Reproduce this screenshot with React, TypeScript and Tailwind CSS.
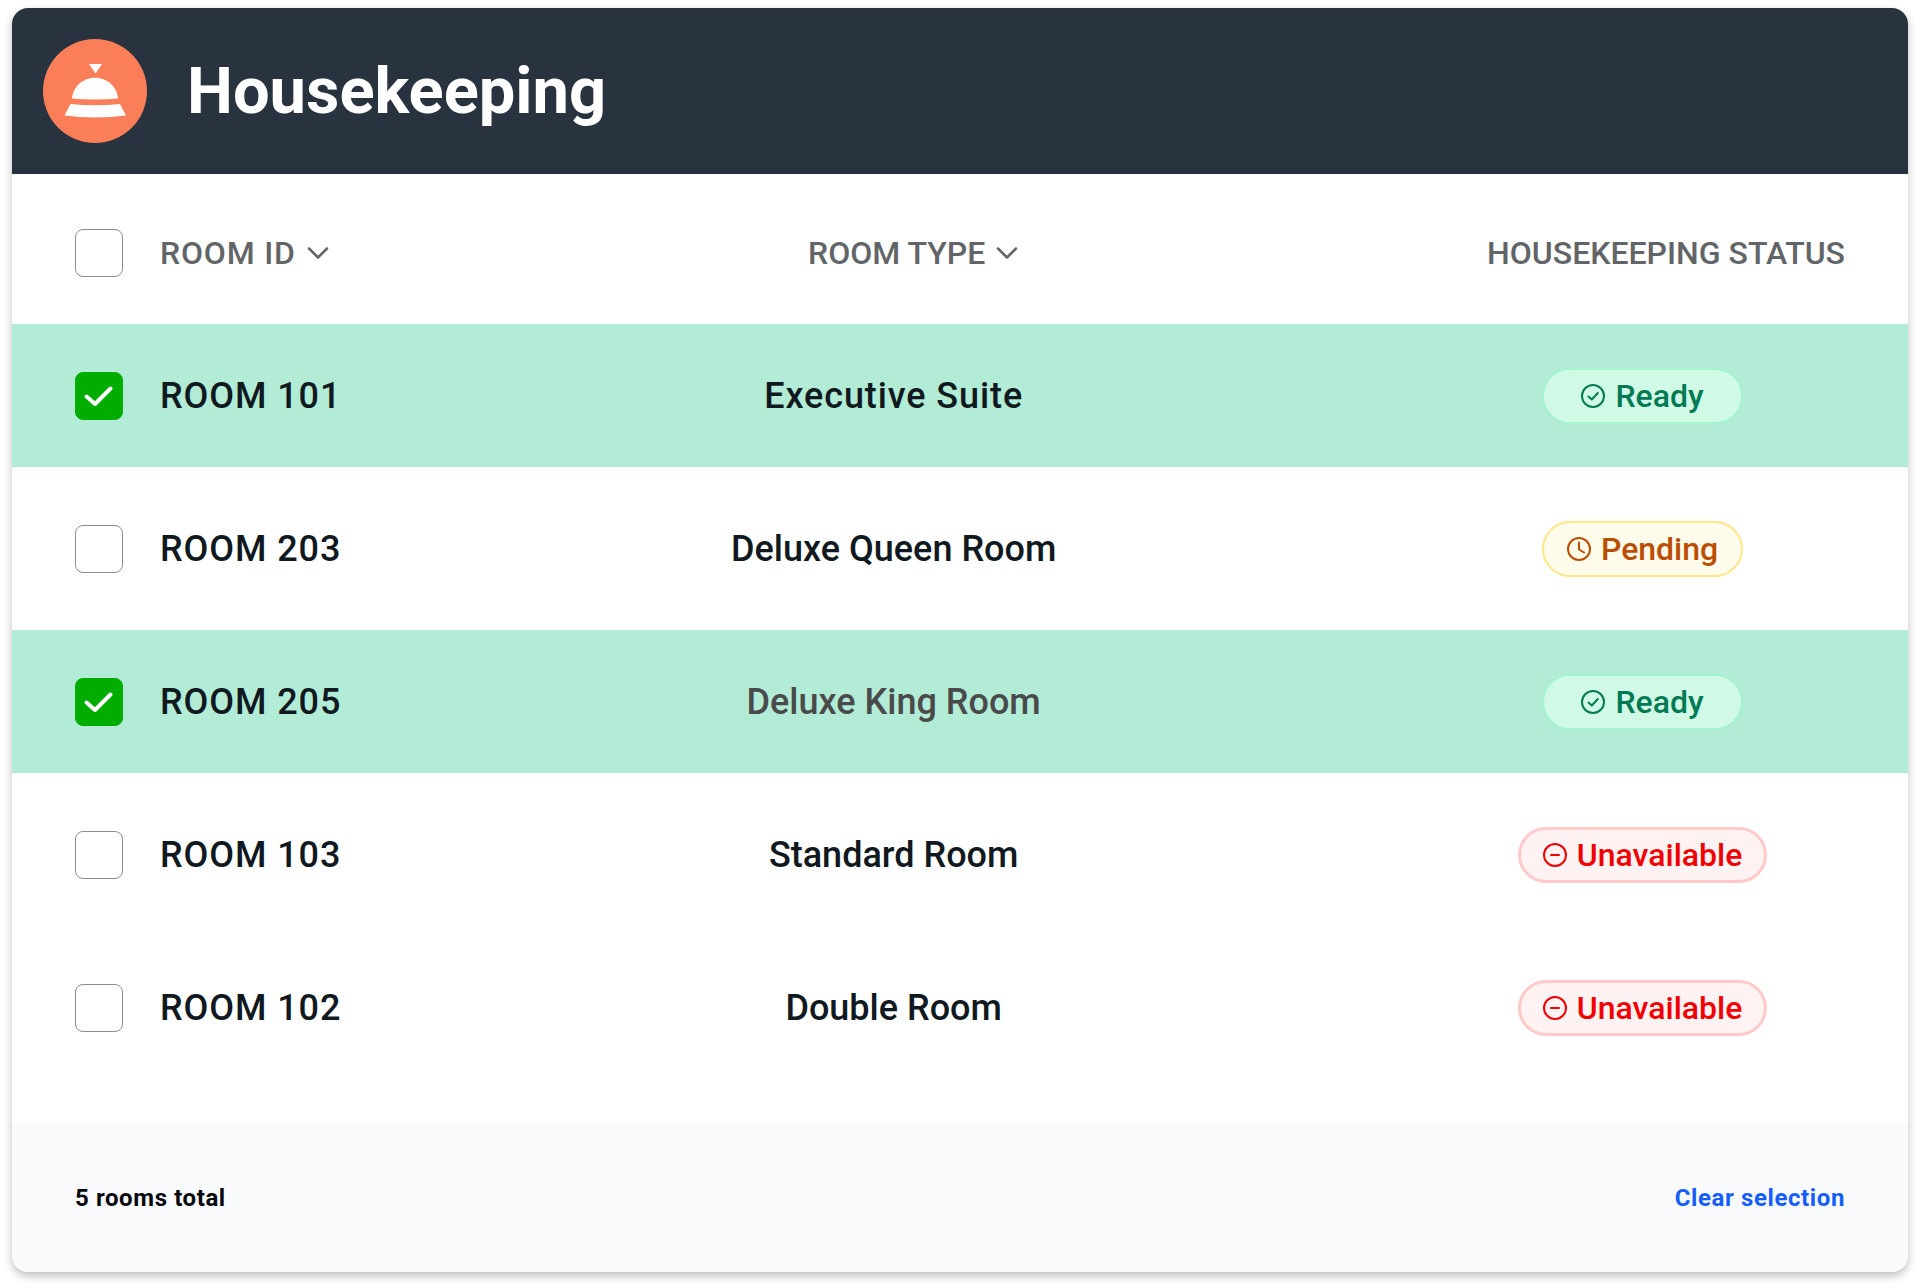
import { useState } from "react";

type Status = "ready" | "pending" | "unavailable";

interface Room {
  id: string;
  name: string;
  type: string;
  typeClass: string;
  status: Status;
}

const rooms: Room[] = [
  { id: "101", name: "ROOM 101", type: "Executive Suite", typeClass: "tracking-wide text-[#101820]", status: "ready" },
  { id: "203", name: "ROOM 203", type: "Deluxe Queen Room", typeClass: "text-[#101820]", status: "pending" },
  { id: "205", name: "ROOM 205", type: "Deluxe King Room", typeClass: "text-[#4a4a4a]", status: "ready" },
  { id: "103", name: "ROOM 103", type: "Standard Room", typeClass: "text-[#101820]", status: "unavailable" },
  { id: "102", name: "ROOM 102", type: "Double Room", typeClass: "text-[#101820]", status: "unavailable" },
];

const badges: Record<Status, { label: string; className: string; icon: string }> = {
  ready: {
    label: "Ready",
    className: "border-2 border-[#a4f4cf] bg-emerald-100 px-[37px] text-emerald-700",
    icon: "M9.5 14.5 12.8 17.5 18.8 11",
  },
  pending: {
    label: "Pending",
    className: "border-2 border-amber-200 bg-amber-50 px-[23px] text-amber-700",
    icon: "M14 7.5V14.5L19 17.5",
  },
  unavailable: {
    label: "Unavailable",
    className: "border-3 border-red-200 bg-red-50 px-[22px] text-[#f00000]",
    icon: "M10 14H18",
  },
};

function StatusBadge({ status }: { status: Status }) {
  const badge = badges[status];
  return (
    <span className={`inline-flex h-14 items-center gap-2.5 rounded-full text-[32px] leading-none ${badge.className}`}>
      <svg className="size-6" viewBox="2 2 24 24" fill="none" stroke="currentColor" strokeWidth="2" strokeLinecap="round" strokeLinejoin="round" aria-hidden="true">
        <circle cx="14" cy="14" r="11" />
        <path d={badge.icon} />
      </svg>
      {badge.label}
    </span>
  );
}

function CheckBox({ label, checked, onChange }: { label: string; checked: boolean; onChange: () => void }) {
  return (
    <span className="grid size-12 shrink-0">
      <input
        type="checkbox"
        aria-label={label}
        checked={checked}
        onChange={onChange}
        className="col-start-1 row-start-1 size-12 cursor-pointer appearance-none rounded-lg border border-[#8b8d90] bg-white checked:border-[#00ad00] checked:bg-[#00ad00]"
      />
      {checked && (
        <svg className="pointer-events-none col-start-1 row-start-1 size-12" viewBox="0 0 48 48" fill="none" stroke="#fff" strokeWidth="4" strokeLinecap="round" strokeLinejoin="round" aria-hidden="true">
          <path d="M11.500 24.500 20 32 35.500 16.500" />
        </svg>
      )}
    </span>
  );
}

function Chevron() {
  return (
    <svg className="h-3 w-6" viewBox="0 0 24 12" fill="none" stroke="currentColor" strokeWidth="2.5" strokeLinecap="round" strokeLinejoin="round" aria-hidden="true">
      <path d="M3 1.5 12 10.5 21 1.5" />
    </svg>
  );
}

function BellLogo() {
  return (
    <svg className="size-26" viewBox="0 0 104 104" aria-hidden="true">
      <circle cx="52" cy="52" r="52" fill="#fa7f59" />
      <g fill="#fff">
        <path d="M46 25H59L52.500 34.500Z" />
        <path d="M29 59.500C30 47.500 40 38.700 52 38.700S74 47.500 75 59.500Q52 61.500 29 59.500Z" />
        <path d="M27.500 65Q52 67.500 77 65L83 76.500Q52 80.500 21.500 76.500Z" />
      </g>
    </svg>
  );
}

export default function App() {
  const [selected, setSelected] = useState<string[]>(["101", "205"]);
  const all = selected.length === rooms.length;
  const toggle = (id: string) =>
    setSelected((ids) => (ids.includes(id) ? ids.filter((i) => i !== id) : [...ids, id]));

  return (
    <main className="min-h-screen bg-white px-3 pt-2 pb-4 font-['Roboto',sans-serif] font-medium">
      <section className="overflow-hidden rounded-2xl bg-white shadow-[0_4px_8px_rgba(0,0,0,0.25)]">
        <header className="flex items-center gap-10 bg-[#29323f] px-[31px] py-[31px]">
          <BellLogo />
          <h1 className="text-[65px] leading-none font-bold text-white">Housekeeping</h1>
        </header>

        <table className="w-full table-fixed border-separate border-spacing-x-0 border-spacing-y-2.5">
          <thead className="text-[32px] text-[#626567]">
            <tr>
              <th className="h-[130px] w-[21%] pt-2 pl-[63px] font-medium">
                <div className="flex items-center gap-[37px]">
                  <CheckBox
                    label="Select all rooms"
                    checked={all}
                    onChange={() => setSelected(all ? [] : rooms.map((r) => r.id))}
                  />
                  <button type="button" className="flex cursor-pointer items-center gap-2.5 tracking-wide whitespace-nowrap">
                    ROOM ID
                    <Chevron />
                  </button>
                </div>
              </th>
              <th className="pt-2 pl-10 font-medium">
                <button type="button" className="inline-flex cursor-pointer items-center gap-2.5">
                  ROOM TYPE
                  <Chevron />
                </button>
              </th>
              <th className="w-[28%] pt-2 pr-[63px] text-right font-medium whitespace-nowrap">HOUSEKEEPING STATUS</th>
            </tr>
          </thead>
          <tbody className="text-4xl">
            {rooms.map((room) => (
              <tr key={room.id} className={selected.includes(room.id) ? "bg-[#b2ebd6]" : "bg-white"}>
                <td className="h-[143px] pl-[63px]">
                  <div className="flex items-center gap-[37px]">
                    <CheckBox label={`Select ${room.name}`} checked={selected.includes(room.id)} onChange={() => toggle(room.id)} />
                    <span className="tracking-wide whitespace-nowrap text-[#101820]">{room.name}</span>
                  </div>
                </td>
                <td className={`text-center ${room.typeClass}`}>{room.type}</td>
                <td>
                  <div className="flex justify-center">
                    <StatusBadge status={room.status} />
                  </div>
                </td>
              </tr>
            ))}
          </tbody>
        </table>

        <footer className="mt-[35px] flex h-[148px] items-center justify-between bg-[#f8fafc] px-[63px] text-2xl font-bold tracking-wide">
          <p className="text-[#06080c]">5 rooms total</p>
          <button type="button" onClick={() => setSelected([])} className="cursor-pointer text-[#155dfc]">
            Clear selection
          </button>
        </footer>
      </section>
    </main>
  );
}
